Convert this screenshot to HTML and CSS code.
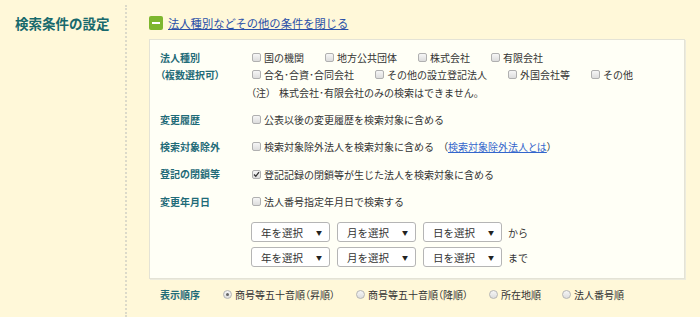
FILE: index.html
```html
<!DOCTYPE html>
<html lang="ja">
<head>
    <meta charset="UTF-8">
    <title>検索条件の設定</title>
    <link rel="stylesheet" href="styles.css">
</head>
<body>
    <div class="page">
        <div class="side">
            <h2 class="side-title">検索条件の設定</h2>
        </div>
        <div class="main">
            <div class="toggle">
                <span class="toggle-icon"><span class="toggle-bar"></span></span>
                <a href="#" class="toggle-link">法人種別などその他の条件を閉じる</a>
            </div>

            <div class="panel">
                <div class="row">
                    <div class="row-label">法人種別<br><span class="prop">（複数選択可）</span></div>
                    <div class="row-body">
                        <div class="line">
                            <label class="check"><span class="box"></span>国の機関</label>
                            <label class="check"><span class="box"></span>地方公共団体</label>
                            <label class="check"><span class="box"></span>株式会社</label>
                            <label class="check"><span class="box"></span>有限会社</label>
                        </div>
                        <div class="line">
                            <label class="check"><span class="box"></span>合名･合資･合同会社</label>
                            <label class="check"><span class="box"></span>その他の設立登記法人</label>
                            <label class="check"><span class="box"></span>外国会社等</label>
                            <label class="check"><span class="box"></span>その他</label>
                        </div>
                        <div class="line note"><span class="prop note-mark">（注）</span>株式会社･有限会社のみの検索はできません。</div>
                    </div>
                </div>

                <div class="row">
                    <div class="row-label">変更履歴</div>
                    <div class="row-body">
                        <label class="check"><span class="box"></span>公表以後の変更履歴を検索対象に含める</label>
                    </div>
                </div>

                <div class="row">
                    <div class="row-label">検索対象除外</div>
                    <div class="row-body">
                        <label class="check"><span class="box"></span>検索対象除外法人を検索対象に含める<span class="prop paren-link">（<a href="#" class="inline-link">検索対象除外法人とは</a>）</span></label>
                    </div>
                </div>

                <div class="row">
                    <div class="row-label">登記の閉鎖等</div>
                    <div class="row-body">
                        <label class="check"><span class="box"><svg width="7" height="7" viewBox="0 0 7 7"><path d="M1 3.5 L2.8 5.3 L6 1.2" fill="none" stroke="#333" stroke-width="1.3"/></svg></span>登記記録の閉鎖等が生じた法人を検索対象に含める</label>
                    </div>
                </div>

                <div class="row">
                    <div class="row-label">変更年月日</div>
                    <div class="row-body">
                        <label class="check"><span class="box"></span>法人番号指定年月日で検索する</label>
                    </div>
                </div>

                <div class="dates">
                    <div class="date-line">
                        <div class="select"><span>年を選択</span><span class="arrow">▼</span></div>
                        <div class="select"><span>月を選択</span><span class="arrow">▼</span></div>
                        <div class="select"><span>日を選択</span><span class="arrow">▼</span></div>
                        <span class="date-word">から</span>
                    </div>
                    <div class="date-line">
                        <div class="select"><span>年を選択</span><span class="arrow">▼</span></div>
                        <div class="select"><span>月を選択</span><span class="arrow">▼</span></div>
                        <div class="select"><span>日を選択</span><span class="arrow">▼</span></div>
                        <span class="date-word">まで</span>
                    </div>
                </div>
            </div>

            <div class="order">
                <div class="order-label">表示順序</div>
                <label class="radio-item"><span class="radio on"></span><span class="prop">商号等五十音順（昇順）</span></label>
                <label class="radio-item"><span class="radio"></span><span class="prop">商号等五十音順（降順）</span></label>
                <label class="radio-item"><span class="radio"></span>所在地順</label>
                <label class="radio-item"><span class="radio"></span>法人番号順</label>
            </div>
        </div>
    </div>
</body>
</html>
```

FILE: styles.css
```css
body {
    margin: 0;
    background-color: #fff8d9;
    color: #333333;
    font-family: "Noto Sans CJK JP", sans-serif;
    font-size: 10px;
}
.page {
    display: flex;
    height: 317px;
}
.side {
    width: 125px;
    margin-top: 5px;
    border-right: 2px dotted #dcdac9;
}
.side-title {
    margin: 0;
    padding: 8px 0 0 15px;
    font-size: 13.5px;
    line-height: 20px;
    color: #17696c;
}
.main {
    width: 536px;
    padding-left: 22px;
}
.toggle {
    display: flex;
    align-items: center;
    gap: 5px;
    margin-top: 13px;
    height: 20px;
}
.toggle-icon {
    width: 14px;
    height: 14px;
    border-radius: 2px;
    background-color: #7db62e;
    display: flex;
    align-items: center;
    justify-content: center;
}
.toggle-bar {
    width: 8px;
    height: 2px;
    background-color: #ffffff;
}
.toggle-link {
    color: #2a4fa8;
    font-size: 11.3px;
    text-decoration: underline;
}
.prop {
    font-feature-settings: "palt";
}
.panel {
    margin-top: 6px;
    background-color: #fffff6;
    border: 1px solid #e4e3d6;
    box-shadow: 1px 1px 0 #ecebde;
    padding: 9px 0 11px 10px;
}
.row {
    display: grid;
    grid-template-columns: 91px 1fr;
    line-height: 17px;
    margin-bottom: 10px;
}
.row-label {
    font-weight: bold;
    color: #1f6b78;
}
.line {
    display: flex;
    gap: 20px;
}
.note {
    margin-top: 1px;
    gap: 0;
}
.note-mark {
    margin-right: 8px;
}
.paren-link {
    margin-left: 6px;
}
.check {
    display: inline-flex;
    align-items: center;
    gap: 3px;
}
.box {
    width: 9px;
    height: 9px;
    margin-left: 1px;
    border: 1px solid #b0b0b0;
    border-radius: 2px;
    background: linear-gradient(#f6f6f6, #dddddd);
    box-sizing: border-box;
    display: flex;
    align-items: center;
    justify-content: center;
}
.inline-link {
    color: #3366cc;
    text-decoration: underline;
}
.dates {
    padding-left: 91px;
    margin-top: 12px;
    display: flex;
    flex-direction: column;
    gap: 5px;
}
.date-line {
    display: flex;
    align-items: center;
    gap: 7px;
}
.select {
    width: 79px;
    height: 20px;
    box-sizing: border-box;
    border: 1px solid #b5b5b5;
    border-radius: 3px;
    background-color: #ffffff;
    display: flex;
    align-items: center;
    justify-content: space-between;
    padding: 0 7px 0 9px;
    font-size: 10.5px;
}
.arrow {
    font-size: 6px;
    color: #222;
}
.date-word {
    margin-left: -1px;
}
.order {
    display: flex;
    align-items: center;
    line-height: 17px;
    margin-top: 7px;
    padding-left: 11px;
}
.order-label {
    width: 63px;
    font-weight: bold;
    color: #1f6b78;
}
.radio-item {
    display: inline-flex;
    align-items: center;
    gap: 3px;
    margin-right: 21px;
}
.radio {
    width: 9px;
    height: 9px;
    box-sizing: border-box;
    border: 1px solid #b5b5b5;
    border-radius: 50%;
    background: linear-gradient(#f6f6f6, #dddddd);
    display: flex;
    align-items: center;
    justify-content: center;
}
.radio.on::after {
    content: "";
    width: 3px;
    height: 3px;
    border-radius: 50%;
    background-color: #666;
}
```
